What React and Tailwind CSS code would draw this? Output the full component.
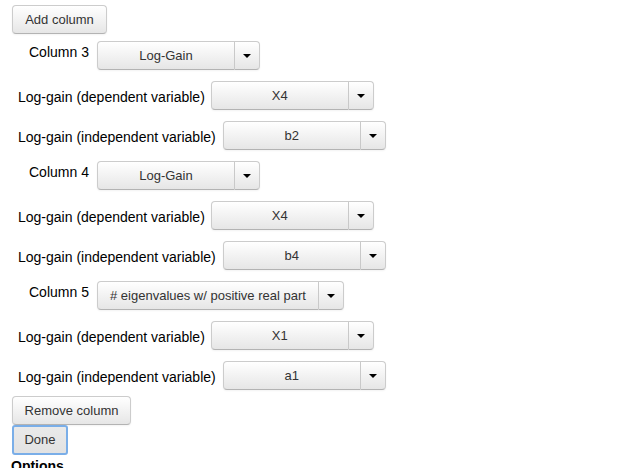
import React from "react";

const btnBase =
  "border border-[#cccccc] border-b-[#b3b3b3] bg-gradient-to-b from-[#ffffff] to-[#e6e6e6] text-[#333333] text-[13px] shadow-[inset_0_1px_0_rgba(255,255,255,0.2),0_1px_2px_rgba(0,0,0,0.05)]";

function Caret() {
  return (
    <svg width="8" height="4" viewBox="0 0 8 4" className="block">
      <polygon points="0,0 8,0 4,4" fill="#000" />
    </svg>
  );
}

function Select({ value, mainClass = "w-[138px]" }) {
  return (
    <div className="flex h-[29px]">
      <div
        className={`${btnBase} ${mainClass} h-[29px] rounded-l-[4px] flex items-center justify-center`}
      >
        {value}
      </div>
      <div
        className={`${btnBase} w-[25px] h-[29px] border-l-0 rounded-r-[4px] flex items-center justify-center`}
      >
        <Caret />
      </div>
    </div>
  );
}

function ColumnRow({ n, value, mainClass }) {
  return (
    <div className="flex items-start h-[29px] pl-[17px] gap-[8px]">
      <span className="text-[14px] leading-[20px] pt-[1px] text-black">Column {n}</span>
      <Select value={value} mainClass={mainClass} />
    </div>
  );
}

function VarRow({ label, value, gap }) {
  return (
    <div className={`flex items-center h-[29px] pl-[6px] ${gap}`}>
      <span className="text-[14px] leading-[20px] text-black translate-y-[0.5px]">{label}</span>
      <Select value={value} />
    </div>
  );
}

export default function App() {
  return (
    <div
      className="w-[638px] h-[468px] overflow-hidden bg-white pt-[5px] pl-[12px]"
      style={{ fontFamily: '"Liberation Sans", Arial, sans-serif' }}
    >
      <button className={`${btnBase} w-[95px] h-[29px] rounded-[4px] flex items-center justify-center`}>
        Add column
      </button>
      <div className="flex flex-col gap-[11px] mt-[7px]">
        <ColumnRow n={3} value="Log-Gain" />
        <VarRow label="Log-gain (dependent variable)" value="X4" gap="gap-[6px]" />
        <VarRow label="Log-gain (independent variable)" value="b2" gap="gap-[7px]" />
        <ColumnRow n={4} value="Log-Gain" />
        <VarRow label="Log-gain (dependent variable)" value="X4" gap="gap-[6px]" />
        <VarRow label="Log-gain (independent variable)" value="b4" gap="gap-[7px]" />
        <ColumnRow n={5} value="# eigenvalues w/ positive real part" mainClass="w-[222px]" />
        <VarRow label="Log-gain (dependent variable)" value="X1" gap="gap-[6px]" />
        <VarRow label="Log-gain (independent variable)" value="a1" gap="gap-[7px]" />
      </div>
      <button
        className={`${btnBase} mt-[6px] w-[119px] h-[29px] rounded-[4px] flex items-center justify-center`}
      >
        Remove column
      </button>
      <button className="w-[56px] h-[30px] rounded-[3px] border-2 border-[#7aaee8] bg-gradient-to-b from-[#eaeaea] to-[#e2e2e2] text-[#333333] text-[13px] flex items-center justify-center">
        Done
      </button>
      <div className="text-[14px] leading-[20px] font-bold text-black mt-[1px] -ml-[1px]">Options</div>
    </div>
  );
}
